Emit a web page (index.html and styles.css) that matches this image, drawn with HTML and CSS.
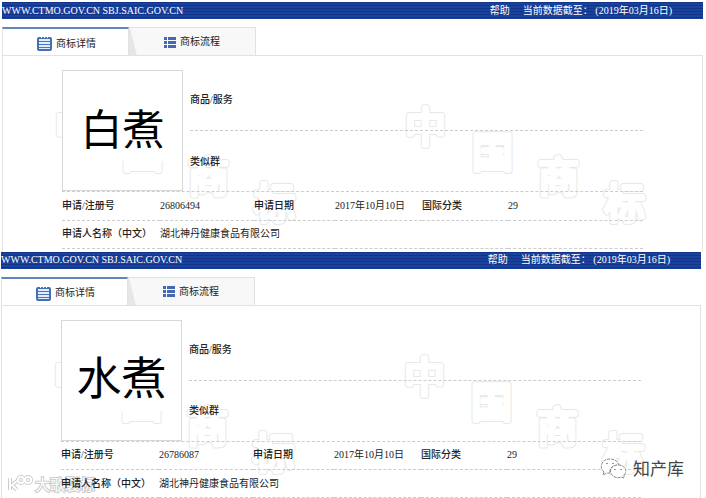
FILE: index.html
```html
<!DOCTYPE html>
<html lang="zh-CN">
<head>
<meta charset="utf-8">
<title>商标详情</title>
<link rel="stylesheet" href="styles.css">
</head>
<body>
<svg class="defs" aria-hidden="true">
  <defs>
    <g id="seal-chars">
      <text x="0" y="38">中</text><text x="67" y="63">国</text><text x="133" y="88">商</text><text x="199" y="114">标</text>
    </g>
    <g id="seal">
      <use href="#seal-chars" class="seal-edge"/>
      <use href="#seal-chars" class="seal-body"/>
    </g>
    <g id="icon-detail">
      <rect x="1" y="2" width="13" height="12" rx="1" fill="#e4eefa" stroke="#4270b8" stroke-width="2"/>
      <path d="M2 5.500h11M2 8.500h11M2 11.500h11" stroke="#4a76bd" stroke-width="1.200"/>
      <path d="M4.500 0v2M7.500 0v2M10.500 0v2" stroke="#fff" stroke-width="1"/>
    </g>
    <g id="icon-flow" fill="#4468b4">
      <path d="M0 0h3v3H0zM4 0h8v3H4zM0 4h3v3H0zM4 4h8v3H4zM0 8h3v3H0zM4 8h8v3H4z"/>
    </g>
  </defs>
</svg>

<section class="record">
  <header class="bar"><span class="site">WWW.CTMO.GOV.CN SBJ.SAIC.GOV.CN</span><a href="#help">帮助</a><span>当前数据截至： (2019年03月16日)</span></header>
  <nav class="tabs">
    <a class="tab active" href="#detail"><svg width="15" height="15"><use href="#icon-detail"/></svg>商标详情</a>
    <a class="tab flow" href="#flow"><svg width="12" height="11"><use href="#icon-flow"/></svg>商标流程</a>
  </nav>
  <div class="panel">
    <svg class="seals" aria-hidden="true"><use href="#seal" x="52" y="48"/><use href="#seal" x="402" y="48"/></svg>
    <div class="content">
      <div class="summary">
        <div class="mark small">白煮</div>
        <div class="fields"><h2>商品/服务</h2><h2>类似群</h2></div>
      </div>
      <table>
        <colgroup><col class="c1"><col class="c2"><col class="c3"><col class="c4"><col class="c5"><col></colgroup>
        <tr><th>申请/注册号</th><td>26806494</td><th>申请日期</th><td>2017年10月10日</td><th>国际分类</th><td>29</td></tr>
        <tr><th>申请人名称（中文）</th><td colspan="5">湖北神丹健康食品有限公司</td></tr>
      </table>
    </div>
  </div>
</section>

<section class="record second">
  <header class="bar"><span class="site">WWW.CTMO.GOV.CN SBJ.SAIC.GOV.CN</span><a href="#help">帮助</a><span>当前数据截至： (2019年03月16日)</span></header>
  <nav class="tabs">
    <a class="tab active" href="#detail"><svg width="15" height="15"><use href="#icon-detail"/></svg>商标详情</a>
    <a class="tab flow" href="#flow"><svg width="12" height="11"><use href="#icon-flow"/></svg>商标流程</a>
  </nav>
  <div class="panel">
    <svg class="seals" aria-hidden="true"><use href="#seal" x="52" y="48"/><use href="#seal" x="402" y="48"/></svg>
    <div class="stamp stamp-left">
      <svg width="26" height="18" fill="none" aria-hidden="true">
        <g stroke="#ccc" stroke-width="4"><path d="M3 3v12M10 6l-5 4 5 5"/><circle cx="14" cy="5" r="3"/><circle cx="21" cy="5" r="3"/></g>
        <g stroke="#fff" stroke-width="2"><path d="M3 3v12M10 6l-5 4 5 5"/><circle cx="14" cy="5" r="3"/><circle cx="21" cy="5" r="3"/></g>
      </svg>
      <span>大歌裂标</span>
    </div>
    <div class="content">
      <div class="summary">
        <div class="mark">水煮</div>
        <div class="fields"><h2>商品/服务</h2><h2>类似群</h2></div>
      </div>
      <table>
        <colgroup><col class="c1"><col class="c2"><col class="c3"><col class="c4"><col class="c5"><col></colgroup>
        <tr><th>申请/注册号</th><td>26786087</td><th>申请日期</th><td>2017年10月10日</td><th>国际分类</th><td>29</td></tr>
        <tr><th>申请人名称（中文）</th><td colspan="5">湖北神丹健康食品有限公司</td></tr>
      </table>
    </div>
  </div>
  <div class="stamp stamp-right">
    <svg width="28" height="22" fill="#fff" stroke="#888" stroke-dasharray="3 1" aria-hidden="true">
      <path d="M4 15C-1 11 1 2 10 2c5 0 8 3 9 6-7 0-10 4-9 8l-3 0-4 2z"/>
      <path d="M24 18c4-4 1-10-6-10s-10 7-5 11c3 2 6 2 8 1l3 1z"/>
      <path d="M7 6v1M13 6v1M15 12v1M21 12v1" stroke="#333"/>
    </svg>
    <span>知产库</span>
  </div>
</section>
</body>
</html>
```

FILE: styles.css
```css
* { box-sizing: border-box; }
body {
  margin: 0;
  padding-top: 2px;
  background: #fff;
  color: #222;
  font: 10px/14px "Liberation Serif", "Noto Sans CJK SC", serif;
}
a { color: inherit; text-decoration: none; }
.defs { position: absolute; width: 0; height: 0; }
.record { position: relative; margin: 0 3px 0 2px; }
.second { margin: 0 5px 0 1px; }
.bar {
  display: flex;
  align-items: center;
  gap: 13px;
  height: 17px;
  padding-right: 31px;
  color: #fff;
  background: repeating-linear-gradient(#12358a 0 1px, #1a429c 1px 3px);
}
.site { flex: 1; }
.tabs { display: flex; height: 28px; margin-top: 8px; }
.tab {
  display: flex;
  align-items: center;
  justify-content: center;
  gap: 4px;
  width: 127px;
  border: 1px solid #e2e2e2;
  border-bottom: 0;
}
.active { padding: 3px 0 0 2px; border-top: 2px solid #6284bd; }
.flow {
  padding-top: 1px;
  border-left: 0;
  background: linear-gradient(76deg, #e6e6e6 7px, #f8f8f8 8px);
}
.panel {
  position: relative;
  padding: 14px 59px 3px;
  border: 1px solid #e2e2e2;
  border-bottom: 0;
}
.second .panel { padding-bottom: 0; }
.seals { position: absolute; top: 0; left: 0; width: 100%; height: 100%; }
#seal-chars { font: 400 41px "Noto Sans CJK SC", sans-serif; stroke-linejoin: round; }
.seal-edge { fill: #e8e8e8; stroke: #e8e8e8; stroke-width: 6px; }
.seal-body { fill: #fff; stroke: #fff; stroke-width: 4px; }
.content { position: relative; }
.summary {
  display: flex;
  gap: 7px;
  height: 122px;
  border-bottom: 1px dashed #ccc;
}
.mark {
  display: grid;
  place-items: center;
  width: 121px;
  height: 121px;
  padding-bottom: 8px;
  border: 1px solid #d8d8d8;
  color: #000;
  background: linear-gradient(#fff 90px, transparent 90px);
  font: 45px/60px "Noto Sans CJK SC", sans-serif;
}
.small { font-size: 42px; }
.fields { flex: 1; }
h2 {
  display: flex;
  align-items: center;
  height: 61px;
  margin: 0;
  font-size: 10px;
  font-weight: 500;
}
h2:first-child { border-bottom: 1px dashed #ccc; }
table { width: 100%; table-layout: fixed; border-collapse: collapse; }
tr { height: 28px; border-bottom: 1px dashed #ccc; }
th, td { padding: 0; text-align: left; white-space: nowrap; }
th { font-weight: 500; }
.c1 { width: 98px; }
.c2 { width: 94px; }
.c3 { width: 81px; }
.c4 { width: 87px; }
.c5 { width: 86px; }
.stamp { position: absolute; display: flex; align-items: center; font-family: "Noto Sans CJK SC", sans-serif; }
.stamp-left { left: 5px; bottom: 5px; gap: 2px; font-size: 15px; color: #fff; -webkit-text-stroke: 2px #ccc; paint-order: stroke; }
.stamp-right { right: 17px; bottom: 18px; gap: 5px; font-size: 17px; line-height: 24px; color: #444; }
```
